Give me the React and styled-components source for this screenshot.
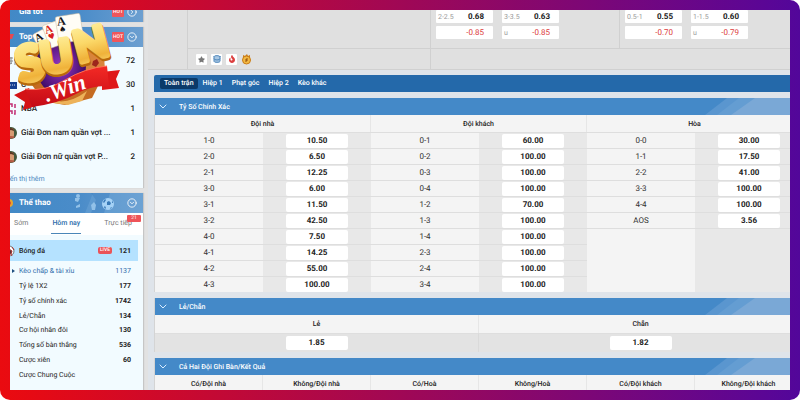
import React, { useState } from "react";
import styled, { createGlobalStyle } from "styled-components";
import { CircleChevronDown, CircleChevronRight, Database } from "lucide-react";
import { FaStar, FaFire } from "react-icons/fa";

const GlobalStyle = createGlobalStyle`
  * {
    box-sizing: border-box;
  }

  body {
    margin: 0;
    background: #fff;
    font-family: Roboto, "Liberation Sans", sans-serif;
    font-size: 7px;
    line-height: 12px;
    color: #222;
    text-rendering: geometricPrecision;
  }

  button {
    font: inherit;
    color: inherit;
    border: none;
    padding: 0;
    margin: 0;
    background: none;
    cursor: pointer;
    text-rendering: inherit;
  }

  a {
    color: inherit;
    text-decoration: none;
  }
`;

const Frame = styled.div`
  position: relative;
  height: 100vh;
  padding: 10px;
  border-radius: 10px;
  background: linear-gradient(90deg, #ea0b10 0%, #e60a14 4%, #5a0696 96%, #52079a 100%);
`;

const Screen = styled.div`
  display: flex;
  height: 100%;
  overflow: hidden;
  background: #e2e2e2;
`;

/* ---------- sidebar ---------- */

const Sidebar = styled.aside`
  flex: 0 0 143px;
  margin-left: -10px;
  margin-top: -8px;
  display: flex;
  flex-direction: column;
  gap: 5px;
`;

const Card = styled.section`
  flex: ${(props) => (props.$fill ? "1 0 auto" : "0 0 auto")};
  background: #f2fbff;
  box-shadow: 1px 0 1px rgba(0, 0, 0, 0.12);
`;

const CardHeader = styled.header`
  position: relative;
  display: flex;
  align-items: center;
  gap: 6px;
  height: 20px;
  padding: 0 6px;
  background: linear-gradient(90deg, #4189c6 0%, #4a8cc9 55%, #6c9fd0 100%);
  color: #fff;

  h2 {
    flex: 1;
    margin: 0;
    font-size: 8px;
    font-weight: 700;
  }
`;

const HeaderIcon = styled.span`
  display: flex;
  justify-content: flex-end;
  width: 8px;
  margin-right: -1px;
`;

const HotBadge = styled.span`
  width: 12px;
  height: 10px;
  border-radius: 1px;
  background: #f0565b;
  font-size: 5px;
  font-weight: 500;
  line-height: 10px;
  text-align: center;
`;

const HeaderArt = styled.svg`
  position: absolute;
  top: 0;
  right: 0;
  width: 80px;
  height: 20px;
`;

const HeaderToggle = styled.button`
  position: relative;
  display: flex;
  margin-left: -3px;
`;

const LeagueList = styled.ul`
  list-style: none;
  margin: 0;
  padding: 2px 8px 0 5px;
`;

const League = styled.li`
  display: flex;
  align-items: center;
  gap: 4px;
  height: 24px;
  font-size: 8px;
  font-weight: 500;

  a {
    flex: 1;
    white-space: nowrap;
  }
`;

const Avatar = styled.svg`
  flex: 0 0 12px;
  width: 12px;
  height: 12px;
`;

const MoreLink = styled.a`
  display: block;
  padding: 4px 0 3px 3px;
  color: #4a86c0;
`;

const DayTabs = styled.div`
  position: relative;
  display: flex;
  justify-content: space-between;
  height: 22px;
  padding: 0 11px 1px 14px;
  background: #fff;
`;

const DayTab = styled.button`
  min-width: ${(props) => (props.$active ? "30px" : "0")};
  border-bottom: 1px solid ${(props) => (props.$active ? "#4a86b8" : "transparent")};
  color: ${(props) => (props.$active ? "#2c6cab" : "#777")};
  font-weight: ${(props) => (props.$active ? 500 : 400)};
`;

const CountBadge = styled.span`
  position: absolute;
  top: 2px;
  right: 2px;
  width: 14px;
  height: 7px;
  border-radius: 1px;
  background: #ee5459;
  color: #fff;
  font-size: 5px;
  line-height: 7px;
  text-align: center;
`;

const SportRow = styled.a`
  display: flex;
  align-items: center;
  gap: 4px;
  height: 21px;
  margin: 5px 5px 3px 0;
  padding: 0 7px 0 3px;
  background: #b5e2ff;
  font-weight: 500;

  b {
    width: 15px;
    text-align: right;
  }
`;

const SportName = styled.span`
  flex: 1;
`;

const LiveBadge = styled.span`
  width: 14px;
  height: 7px;
  border-radius: 2px;
  background: #ea5358;
  color: #fff;
  font-size: 5px;
  font-weight: 500;
  line-height: 7px;
  text-align: center;
`;

const MarketList = styled.ul`
  display: grid;
  grid-template-rows: repeat(8, 1fr);
  height: 118px;
  list-style: none;
  margin: 0;
  padding: 0 12px 0 19px;
`;

const Market = styled.li`
  position: relative;
  display: flex;
  align-items: center;
  justify-content: space-between;
  color: ${(props) => (props.$active ? "#2f6eac" : "#222")};

  b {
    font-weight: ${(props) => (props.$active ? 400 : 700)};
  }

  &::before {
    content: "";
    position: absolute;
    left: -7px;
    display: ${(props) => (props.$active ? "block" : "none")};
    border: 2px solid transparent;
    border-left: 3px solid #1f4f80;
  }
`;

/* ---------- main ---------- */

const Main = styled.main`
  flex: 1;
  min-width: 0;
  margin: 0 -13px 0 5px;
  background: #e3e4e6;
`;

const MatchGrid = styled.div`
  display: grid;
  grid-template-columns: 40px 243fr 189fr 183fr;
  grid-template-rows: 39px 20px;
  background: #e0e0e0;
  border-bottom: 1px solid #d0d0d0;
`;

const MatchCell = styled.div`
  grid-row: ${(props) => (props.$tall ? "1 / 3" : "auto")};
  grid-column: ${(props) => (props.$wide ? "3 / 5" : "auto")};
  display: flex;
  gap: 9px;
  padding-left: 5px;
  border-right: ${(props) => (props.$divide ? "1px solid #d0d0d0" : "none")};
  border-bottom: ${(props) => (props.$under ? "1px solid #d0d0d0" : "none")};
`;

const OddsPair = styled.div`
  width: 57px;
`;

const MatchOdd = styled.button`
  display: flex;
  justify-content: space-between;
  align-items: center;
  width: 100%;
  height: 13px;
  margin-bottom: 3px;
  padding: 0 9px 0 2px;
  border-radius: 1px;
  background: #fff;

  span {
    color: #999;
  }

  b {
    font-size: 8px;
    font-weight: ${(props) => (props.$negative ? 400 : 700)};
    color: ${(props) => (props.$negative ? "#dc3c3c" : "#222")};
  }
`;

const Tools = styled.div`
  display: flex;
  align-items: center;
  gap: 4px;
  padding-left: 8px;
  border-right: 1px solid #d0d0d0;
`;

const ToolButton = styled.button`
  display: flex;
  align-items: center;
  justify-content: center;
  width: 11px;
  height: 11px;
  border-radius: 1px;
  background: ${(props) => (props.$plain ? "none" : "#fff")};
  color: ${(props) => props.$color};
`;

const Body = styled.div`
  display: flex;
  flex-direction: column;
  gap: 6px;
  padding: 5px 0 0 6px;
  background: #dfe4ea;
`;

const PeriodTabs = styled.nav`
  display: flex;
  align-items: center;
  gap: 1px;
  height: 17px;
  padding-left: 6px;
  border-radius: 2px 0 0 0;
  background: #2469aa;
  color: #fff;
`;

const PeriodTab = styled.button`
  height: 11px;
  padding: 0 4px;
  border-radius: 2px;
  background: ${(props) => (props.$active ? "#0b3a69" : "transparent")};
  line-height: 11px;
  font-weight: 500;
`;

const Panel = styled.section`
  border-left: 1px solid #d4d4d4;
`;

const PanelHeader = styled.header`
  display: flex;
  align-items: center;
  height: 17px;
  padding-left: 4px;
  background: #4489c8;
  color: #fff;

  h3 {
    flex: 1;
    margin: 0 0 0 12px;
    font-size: 7px;
    font-weight: 500;
  }
`;

const Toggle = styled.button`
  display: flex;
  width: 8px;
`;

const OddsTable = styled.table`
  width: 100%;
  table-layout: fixed;
  border-collapse: separate;
  border-spacing: 0;
  background: #f4f4f4;

  th,
  td {
    padding: 0;
    text-align: center;
  }

  thead th {
    height: ${(props) => (props.$roomy ? "18px" : "17px")};
    border-right: 1px solid #e6e6e6;
    font-weight: 500;
  }
`;

const ScoreCell = styled.th`
  height: 16px;
  border-top: 1px solid #dedede;
  background: #f4f4f4;
  font-size: 8px;
  font-weight: 400;
  color: #333;
`;

const PriceCell = styled.td`
  height: ${(props) => (props.$roomy ? "19px" : "16px")};
  border-top: 1px solid #dedede;
  border-right: ${(props) => (props.$roomy ? "1px solid #dadada" : "none")};
  background: ${(props) => (props.$roomy ? "#e3e3e3" : "#e8e8e8")};
`;

const Price = styled.button`
  display: block;
  width: 62px;
  height: 14px;
  margin: 0 auto;
  border-radius: 2px;
  background: #fff;
  font-size: 8px;
  font-weight: 700;
  line-height: 14px;
`;

const LogoSvg = styled.svg`
  position: absolute;
  top: 10px;
  left: 12px;
  width: 112px;
  height: 106px;
  pointer-events: none;
`;

const leagues = [
  { name: "", count: 72, kind: "script" },
  { name: "C", count: 30, kind: "blue" },
  { name: "NBA", count: 1, kind: "pink" },
  { name: "Giải Đơn nam quần vợt ...", count: 1, kind: "player" },
  { name: "Giải Đơn nữ quần vợt P...", count: 2, kind: "player" },
];

const markets = [
  ["Kèo chấp & tài xỉu", 1137],
  ["Tỷ lệ 1X2", 177],
  ["Tỷ số chính xác", 1742],
  ["Lẻ/Chẵn", 134],
  ["Cơ hội nhân đôi", 130],
  ["Tổng số bàn thắng", 536],
  ["Cược xiên", 60],
  ["Cược Chung Cuộc", ""],
];

const periods = ["Toàn trận", "Hiệp 1", "Phạt góc", "Hiệp 2", "Kèo khác"];

const scores = [
  ["1-0", "10.50", "0-1", "60.00", "0-0", "30.00"],
  ["2-0", "6.50", "0-2", "100.00", "1-1", "17.50"],
  ["2-1", "12.25", "0-3", "100.00", "2-2", "41.00"],
  ["3-0", "6.00", "0-4", "100.00", "3-3", "100.00"],
  ["3-1", "11.50", "1-2", "70.00", "4-4", "100.00"],
  ["3-2", "42.50", "1-3", "100.00", "AOS", "3.56"],
  ["4-0", "7.50", "1-4", "100.00"],
  ["4-1", "14.25", "2-3", "100.00"],
  ["4-2", "55.00", "2-4", "100.00"],
  ["4-3", "100.00", "3-4", "100.00"],
];

const resultHeads = [
  "Có/Đội nhà",
  "Không/Đội nhà",
  "Có/Hoà",
  "Không/Hoà",
  "Có/Đội khách",
  "Không/Đội khách",
];

const LeagueIcon = ({ kind }) => (
  <Avatar viewBox="0 0 12 12" aria-hidden="true">
    {kind === "script" && (
      <path
        d="M5 3h3M6 2v7M4 6h4M9 2l2 1M9 5h3M10 4v6M5 9l2-1"
        stroke="#888"
        fill="none"
      />
    )}
    {kind === "blue" && (
      <>
        <rect y="3" width="12" height="7" fill="#143f91" />
        <path d="M5 6h6" stroke="#d5dff2" strokeDasharray="1 1" />
      </>
    )}
    {kind === "pink" && (
      <path
        d="M5 1h2v3M10 1v4M5 8h2v3M10 7v4H9"
        stroke="#c22f74"
        strokeWidth="1.500"
        fill="none"
      />
    )}
    {kind === "player" && (
      <>
        <circle cx="6" cy="6" r="6" fill="#44583c" />
        <path d="M3 5a3 4 0 0 1 6 0v3a3 3 0 0 1-6 0z" fill="#d79a72" />
        <path d="M3 4a3 3 0 0 1 6 0L6 3z" fill="#583622" />
        <path d="M2 10q4-2 8 0a6 6 0 0 1-8 0z" fill="#b65a43" />
      </>
    )}
  </Avatar>
);

const SportArt = () => (
  <HeaderArt viewBox="0 0 80 20" aria-hidden="true">
    <path d="M22 20L30 0H80V20z" fill="#6fa6d8" opacity=".45" />
    <path d="M28 0l5 7-5 13h13l6-20z" fill="#3c7fbf" opacity=".45" />
    <g fill="#92c1e8">
      <circle cx="15" cy="3" r="2" />
      <path d="M12 5h5l-2 4-3-1zM13 13l4-2v3l-4 1zM28 12l3-3 2 3-1 5h-3z" />
    </g>
    <circle cx="45" cy="11" r="6" fill="#a5d2f6" />
    <path
      d="M44 9l2-1 2 2-1 2h-3zM40 9l2-3 1 1-2 3zM49 7l1 3-1 0zM41 14l1-1 1 2-1 1zM47 16l1-2 1 1z"
      fill="#3779b7"
    />
  </HeaderArt>
);

const Stripes = () => (
  <svg width="98" height="17" viewBox="0 0 98 17" aria-hidden="true">
    <path d="M0 17L22 0H37L15 17z" fill="#5a96cf" />
    <path d="M12 17L34 0H98V17z" fill="#649dd2" />
    <path d="M26 17L50 0H98V17z" fill="#7aa8d6" />
  </svg>
);

const PanelTitle = ({ children }) => (
  <PanelHeader>
    <Toggle aria-label="Thu gọn">
      <svg width="8" height="6" viewBox="0 0 8 6">
        <path d="M1 1l3 3 3-3" fill="none" stroke="#d8ecff" strokeLinecap="round" />
      </svg>
    </Toggle>
    <h3>{children}</h3>
    <Stripes />
  </PanelHeader>
);

const PlayingCard = ({ x, y, w, h, angle, color, suit, size = 11 }) => (
  <g transform={`translate(${x} ${y}) rotate(${angle})`}>
    <rect width={w} height={h} rx="2" fill="#fffdf6" stroke="#c9bda5" strokeWidth=".5" />
    <text x="1" y="9" fontSize={size} fontFamily="Liberation Serif, serif" fontWeight="700" fill={color}>
      A
    </text>
    <text x="2" y="16" fontSize="8" fontFamily="DejaVu Sans, sans-serif" fill={color}>
      {suit}
    </text>
  </g>
);

const goldText = {
  fontFamily: "Lato, sans-serif",
  fontWeight: 900,
  fill: "url(#gold)",
  stroke: "url(#gold)",
  strokeWidth: 5,
  strokeLinejoin: "round",
};

const goldEdge = { ...goldText, fill: "#b8690c", stroke: "#b8690c", strokeWidth: 6 };

const letters = [
  { char: "S", x: 21, y: 84, angle: -14, size: 49 },
  { char: "U", x: 43, y: 75, angle: -9, size: 43 },
  { char: "N", x: 79, y: 64, angle: -15, size: 43 },
];

const SunLogo = () => (
  <LogoSvg viewBox="12 10 112 106" role="img" aria-label="Sun Win">
    <defs>
      <linearGradient id="gold" x1="0" y1="0" x2="0" y2="1">
        <stop offset="0" stopColor="#fff3a6" />
        <stop offset=".45" stopColor="#fbd868" />
        <stop offset=".75" stopColor="#f0b23a" />
        <stop offset="1" stopColor="#fbdc7c" />
      </linearGradient>
      <radialGradient id="orb">
        <stop offset="0" stopColor="#9838c4" />
        <stop offset="1" stopColor="#3f0b68" />
      </radialGradient>
      <linearGradient id="ribbon" x1="0" y1="0" x2="0" y2="1">
        <stop offset="0" stopColor="#f32a25" />
        <stop offset="1" stopColor="#c40a15" />
      </linearGradient>
    </defs>
    <path d="M31 61L45 38 75 33 102 51 105 72 92 98 65 105 43 101 30 82z" fill="#c56b22" />
    <path d="M86 48l18 8 1 14-15 10-6-13z" fill="#d8843c" />
    <path d="M93 61l4-2 2 4-3 4-4-2z" fill="#9d261c" />
    <ellipse cx="61" cy="66" rx="25" ry="29" fill="url(#orb)" />
    <path d="M45 96q18 13 42-5l-5 10-14 4-15-2z" fill="#edb259" />
    <PlayingCard x={32} y={35} w={13} h={20} angle={-28} color="#17171a" suit="♠" />
    <PlayingCard x={42} y={26} w={17} h={24} angle={-20} color="#d91d21" suit="♥" />
    <PlayingCard x={55} y={17} w={25} h={27} angle={-9} color="#17171a" suit="♠" size={12} />
    {letters.map(({ char, x, y, angle, size }) => (
      <g key={char} transform={`translate(${x} ${y}) rotate(${angle})`} fontSize={size}>
        <text y="1" style={goldEdge} aria-hidden="true">
          {char}
        </text>
        <text y="-1" style={goldText}>
          {char}
        </text>
      </g>
    ))}
    <path d="M14 95L29 88 36 106 23 110 25 102z" fill="#d41216" />
    <path d="M102 72L120 70 116 79 119 88 102 90z" fill="#df1719" />
    <path d="M25 89l15 7-6 10z" fill="#8c0710" />
    <path d="M25 89Q45 92 65 80T107 66L109 86Q92 85 76 94T32 107z" fill="url(#ribbon)" />
    <path d="M25 89Q45 92 65 80T107 66" stroke="#ff7055" fill="none" />
    <text
      transform="translate(47 102) rotate(-19)"
      fontSize="22"
      fontFamily="Liberation Serif, serif"
      fontStyle="italic"
      fontWeight="700"
      fill="#fff"
    >
      .Win
    </text>
  </LogoSvg>
);

const MatchPrice = ({ line, price }) => (
  <MatchOdd $negative={price.startsWith("-")}>
    <span>{line}</span>
    <b>{price}</b>
  </MatchOdd>
);

const App = () => {
  const [period, setPeriod] = useState(0);
  const [day, setDay] = useState(1);

  return (
    <>
      <GlobalStyle />
      <Frame>
        <Screen>
          <Sidebar>
            <Card>
              <CardHeader>
                <HeaderIcon />
                <h2>Giá tốt</h2>
                <HotBadge>HOT</HotBadge>
                <HeaderToggle aria-label="Mở">
                  <CircleChevronRight size={10} strokeWidth={2} />
                </HeaderToggle>
              </CardHeader>
            </Card>

            <Card>
              <CardHeader>
                <HeaderIcon>
                  <svg width="6" height="10" viewBox="0 0 6 10">
                    <path d="M0 2h6L4 7H0z" fill="#e84950" />
                  </svg>
                </HeaderIcon>
                <h2>Top</h2>
                <HotBadge>HOT</HotBadge>
                <HeaderToggle aria-label="Thu gọn">
                  <CircleChevronDown size={10} strokeWidth={2} />
                </HeaderToggle>
              </CardHeader>
              <LeagueList>
                {leagues.map(({ name, count, kind }) => (
                  <League key={name}>
                    <LeagueIcon kind={kind} />
                    <a href="#league">{name}</a>
                    <span>{count}</span>
                  </League>
                ))}
              </LeagueList>
              <MoreLink href="#more">Hiển thị thêm</MoreLink>
            </Card>

            <Card $fill>
              <CardHeader>
                <SportArt />
                <HeaderIcon>
                  <svg width="8" height="10" viewBox="0 0 8 10">
                    <circle cx="3" cy="5" r="4" fill="#e9a32c" />
                    <circle cx="3" cy="5" r="2" fill="#db4b2f" />
                  </svg>
                </HeaderIcon>
                <h2>Thể thao</h2>
                <HeaderToggle aria-label="Thu gọn">
                  <CircleChevronDown size={10} strokeWidth={2} />
                </HeaderToggle>
              </CardHeader>
              <DayTabs>
                {["Sớm", "Hôm nay", "Trực tiếp"].map((label, i) => (
                  <DayTab key={label} $active={i === day} onClick={() => setDay(i)}>
                    {label}
                  </DayTab>
                ))}
                <CountBadge>21</CountBadge>
              </DayTabs>
              <SportRow href="#football">
                <Avatar viewBox="0 0 12 12" aria-hidden="true">
                  <circle cx="6" cy="6" r="5" fill="#fff" stroke="#777" />
                  <path d="M6 4l3 2-1 3H5L4 6zM9 2l2 3M8 9l1 2" fill="#533" stroke="#a33" />
                </Avatar>
                <SportName>Bóng đá</SportName>
                <LiveBadge>LIVE</LiveBadge>
                <b>121</b>
              </SportRow>
              <MarketList>
                {markets.map(([name, count], i) => (
                  <Market key={name} $active={i === 0}>
                    <a href="#market">{name}</a>
                    <b>{count}</b>
                  </Market>
                ))}
              </MarketList>
            </Card>
          </Sidebar>

          <Main>
            <MatchGrid>
              <MatchCell $tall $divide />
              <MatchCell $divide $under />
              <MatchCell $divide $under>
                <OddsPair>
                  <MatchPrice line="2-2.5" price="0.68" />
                  <MatchPrice line="" price="-0.85" />
                </OddsPair>
                <OddsPair>
                  <MatchPrice line="3-3.5" price="0.63" />
                  <MatchPrice line="u" price="-0.85" />
                </OddsPair>
              </MatchCell>
              <MatchCell $under>
                <OddsPair>
                  <MatchPrice line="0.5-1" price="0.55" />
                  <MatchPrice line="" price="-0.70" />
                </OddsPair>
                <OddsPair>
                  <MatchPrice line="1-1.5" price="0.60" />
                  <MatchPrice line="u" price="-0.79" />
                </OddsPair>
              </MatchCell>
              <Tools>
                <ToolButton $color="#777" aria-label="Yêu thích">
                  <FaStar size={7} />
                </ToolButton>
                <ToolButton $color="#4a83b8" aria-label="Thống kê">
                  <Database size={8} fill="#a9c8e4" strokeWidth={3} />
                </ToolButton>
                <ToolButton $color="#dc3f3f" aria-label="Kèo nóng">
                  <FaFire size={8} />
                </ToolButton>
                <ToolButton $plain $color="#d58c1c" aria-label="Tiền thưởng">
                  <svg width="11" height="11" viewBox="0 0 11 11">
                    <path d="M2 1l2 1 2-2 1 2 2-1v3H2z" fill="#c97b16" />
                    <circle cx="5.500" cy="6" r="4" fill="#f2b942" stroke="#c97b16" />
                    <path d="M7 5H5v1h1v1H4" stroke="#96500e" fill="none" />
                  </svg>
                </ToolButton>
              </Tools>
              <MatchCell $wide />
            </MatchGrid>

            <Body>
              <PeriodTabs>
                {periods.map((label, i) => (
                  <PeriodTab key={label} $active={i === period} onClick={() => setPeriod(i)}>
                    {label}
                  </PeriodTab>
                ))}
              </PeriodTabs>

              <Panel>
                <PanelTitle>Tỷ Số Chính Xác</PanelTitle>
                <OddsTable>
                  <thead>
                    <tr>
                      <th colSpan={2}>Đội nhà</th>
                      <th colSpan={2}>Đội khách</th>
                      <th colSpan={2}>Hòa</th>
                    </tr>
                  </thead>
                  <tbody>
                    {scores.map((row, i) => (
                      <tr key={row[0]}>
                        {row.map((value, col) =>
                          col % 2 === 0 ? (
                            <ScoreCell key={col}>{value}</ScoreCell>
                          ) : (
                            <PriceCell key={col}>
                              <Price>{value}</Price>
                            </PriceCell>
                          )
                        )}
                        {i === 6 && (
                          <>
                            <ScoreCell as="td" rowSpan={4} />
                            <PriceCell rowSpan={4} />
                          </>
                        )}
                      </tr>
                    ))}
                  </tbody>
                </OddsTable>
              </Panel>

              <Panel>
                <PanelTitle>Lẻ/Chẵn</PanelTitle>
                <OddsTable $roomy>
                  <thead>
                    <tr>
                      <th>Lẻ</th>
                      <th>Chẵn</th>
                    </tr>
                  </thead>
                  <tbody>
                    <tr>
                      <PriceCell $roomy>
                        <Price>1.85</Price>
                      </PriceCell>
                      <PriceCell $roomy>
                        <Price>1.82</Price>
                      </PriceCell>
                    </tr>
                  </tbody>
                </OddsTable>
              </Panel>

              <Panel>
                <PanelTitle>Cả Hai Đội Ghi Bàn/Kết Quả</PanelTitle>
                <OddsTable $roomy>
                  <thead>
                    <tr>
                      {resultHeads.map((label) => (
                        <th key={label}>{label}</th>
                      ))}
                    </tr>
                  </thead>
                </OddsTable>
              </Panel>
            </Body>
          </Main>
        </Screen>
        <SunLogo />
      </Frame>
    </>
  );
};

export default App;
